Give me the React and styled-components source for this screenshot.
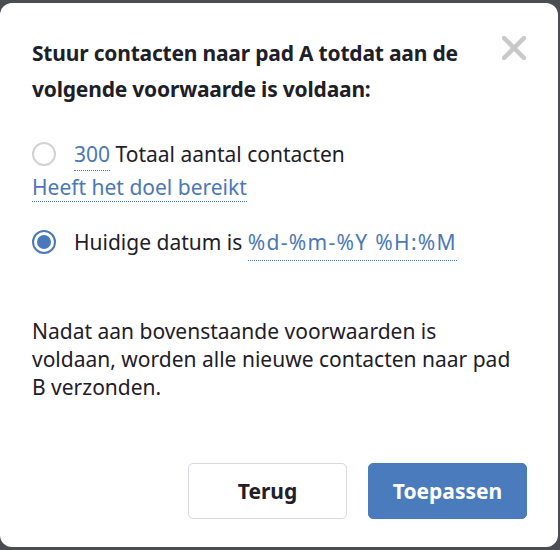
import React, { useState } from "react";
import styled, { createGlobalStyle } from "styled-components";

const Global = createGlobalStyle`
  html, body { margin: 0; padding: 0; }
  body {
    background: #4c4d53;
    font-family: "Noto Sans", "Open Sans", sans-serif;
    width: 560px;
    height: 550px;
    overflow: hidden;
  }
`;

const Backdrop = styled.div`
  width: 560px;
  height: 550px;
  padding-top: 3px;
  box-sizing: border-box;
`;

const Dialog = styled.div`
  width: 558px;
  height: 544px;
  box-sizing: border-box;
  background: #ffffff;
  border-radius: 12px;
  padding: 32px 31px 28px 32px;
  display: flex;
  flex-direction: column;
  color: #1e2028;
`;

const Header = styled.div`
  display: flex;
  align-items: flex-start;
  justify-content: space-between;
  gap: 20px;
`;

const Title = styled.h2`
  margin: 0;
  font-size: 21px;
  font-weight: 700;
  line-height: 36px;
  letter-spacing: -0.2px;
  max-width: 450px;
`;

const CloseButton = styled.button`
  border: 0;
  background: none;
  padding: 0;
  margin: 1px 1px 0 0;
  width: 24px;
  height: 24px;
  cursor: pointer;
  display: flex;
  flex: none;
`;

const Options = styled.div`
  margin-top: 32px;
  display: flex;
  flex-direction: column;
`;

const OptionRow = styled.label`
  display: flex;
  align-items: center;
  gap: 18px;
  font-size: 21px;
  line-height: 30px;
  margin-top: ${(p) => p.$gap || 0}px;
`;

const Radio = styled.span`
  width: 24px;
  height: 24px;
  box-sizing: border-box;
  border-radius: 50%;
  border: 2px solid ${(p) => (p.$checked ? "#4a79bb" : "#d2d2d2")};
  display: flex;
  align-items: center;
  justify-content: center;
  flex: none;
  &::after {
    content: "";
    display: ${(p) => (p.$checked ? "block" : "none")};
    width: 14px;
    height: 14px;
    border-radius: 50%;
    background: #4a79bb;
  }
`;

const Link = styled.span`
  color: #4a78b9;
  border-bottom: 1px dotted #4a78b9;
  padding-bottom: ${(p) => p.$pad || 0}px;
  letter-spacing: ${(p) => p.$spacing || 0}px;
`;

const Goal = styled.div`
  font-size: 21px;
  line-height: 30px;
  margin-top: 3px;
`;

const Note = styled.p`
  margin: 60px 0 0;
  font-size: 21px;
  line-height: 28px;
  width: 510px;
`;

const Footer = styled.div`
  margin-top: auto;
  display: flex;
  justify-content: flex-end;
  gap: 21px;
`;

const Button = styled.button`
  width: 159px;
  height: 56px;
  border-radius: 5px;
  font-family: inherit;
  font-size: 21px;
  font-weight: 700;
  cursor: pointer;
  border: 1px solid ${(p) => (p.$primary ? "#4a7bbd" : "#d7d9e0")};
  background: ${(p) => (p.$primary ? "#4a7bbd" : "#ffffff")};
  color: ${(p) => (p.$primary ? "#ffffff" : "#1e2028")};
`;

export default function App() {
  const [choice, setChoice] = useState("date");
  return (
    <>
      <Global />
      <Backdrop>
        <Dialog>
          <Header>
            <Title>
              Stuur contacten naar pad A totdat aan de volgende voorwaarde is
              voldaan:
            </Title>
            <CloseButton aria-label="Sluiten">
              <svg width="24" height="24" viewBox="0 0 24 24">
                <path
                  d="M2 2 L22 22 M22 2 L2 22"
                  stroke="#c9c9c9"
                  strokeWidth="4.5"
                  strokeLinecap="round"
                />
              </svg>
            </CloseButton>
          </Header>
          <Options>
            <OptionRow onClick={() => setChoice("total")}>
              <Radio $checked={choice === "total"} />
              <span>
                <Link $pad={2}>300</Link> Totaal aantal contacten
              </span>
            </OptionRow>
            <Goal>
              <Link>Heeft het doel bereikt</Link>
            </Goal>
            <OptionRow $gap={25} onClick={() => setChoice("date")}>
              <Radio $checked={choice === "date"} />
              <span>
                Huidige datum is{" "}
                <Link $pad={4} $spacing={1.3}>
                  %d-%m-%Y %H:%M
                </Link>
              </span>
            </OptionRow>
          </Options>
          <Note>
            Nadat aan bovenstaande voorwaarden is
            <br />
            voldaan, worden alle nieuwe contacten naar pad
            <br />
            B verzonden.
          </Note>
          <Footer>
            <Button>Terug</Button>
            <Button $primary>Toepassen</Button>
          </Footer>
        </Dialog>
      </Backdrop>
    </>
  );
}
